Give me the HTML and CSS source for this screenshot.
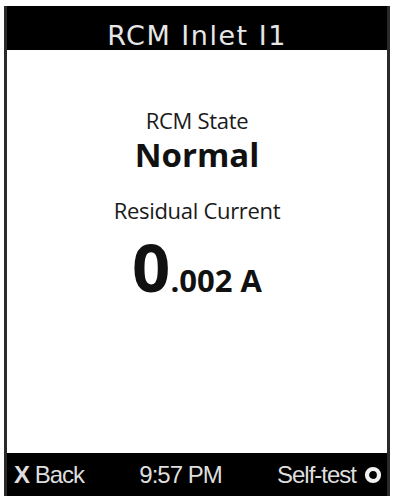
FILE: index.html
```html
<!DOCTYPE html>
<html>
<head>
<meta charset="utf-8">
<link rel="stylesheet" href="styles.css">
</head>
<body>
<div class="screen">
  <div class="header">RCM Inlet I1</div>
  <div class="content">
    <div class="label label-state">RCM State</div>
    <div class="state">Normal</div>
    <div class="label label-current">Residual Current</div>
    <div class="reading"><span class="big">0</span><span class="small">.002 A</span></div>
  </div>
  <div class="footer">
    <div class="back"><span class="x">X</span> Back</div>
    <div class="time">9:57 PM</div>
    <div class="selftest">Self-test <svg class="ring" width="18" height="18" viewBox="0 0 18 18"><circle cx="9" cy="9" r="6" fill="none" stroke="#f2f2f2" stroke-width="4.2"/></svg></div>
  </div>
</div>
</body>
</html>
```
FILE: styles.css
```css
html, body {
  margin: 0;
  padding: 0;
  background: #fff;
}
.screen {
  margin: 6px 0 0 4px;
  width: 386px;
  height: 490px;
  box-sizing: border-box;
  background: #000;
  border-left: 3px solid #2a2a2a;
  border-right: 3px solid #2a2a2a;
  display: flex;
  flex-direction: column;
}
.header {
  height: 44px;
  flex: none;
  color: #e6e6e6;
  font-family: "DejaVu Sans", sans-serif;
  font-size: 27px;
  letter-spacing: 1.5px;
  text-align: center;
  line-height: 59px;
  overflow: hidden;
}
.content {
  flex: 1;
  background: #fff;
  display: flex;
  flex-direction: column;
  align-items: center;
  font-family: "Open Sans", sans-serif;
  color: #111;
}
.label {
  font-size: 22px;
  line-height: 30px;
  color: #1a1a1a;
  letter-spacing: -0.3px;
}
.label-state {
  margin-top: 55px;
}
.state {
  font-size: 33px;
  font-weight: 700;
  line-height: 40px;
}
.label-current {
  margin-top: 20px;
}
.reading {
  font-weight: 700;
  line-height: 70px;
  margin-top: 6px;
}
.big {
  font-size: 67px;
}
.small {
  font-size: 31px;
}
.footer {
  height: 43px;
  flex: none;
  display: flex;
  align-items: center;
  justify-content: space-between;
  padding: 0 5px 0 7px;
  color: #dedede;
  font-family: "Liberation Sans", sans-serif;
  font-size: 24px;
  letter-spacing: -1px;
}
.x {
  font-weight: 700;
}
.selftest {
  display: flex;
  align-items: center;
  gap: 8px;
}
.ring {
  display: block;
}
```
